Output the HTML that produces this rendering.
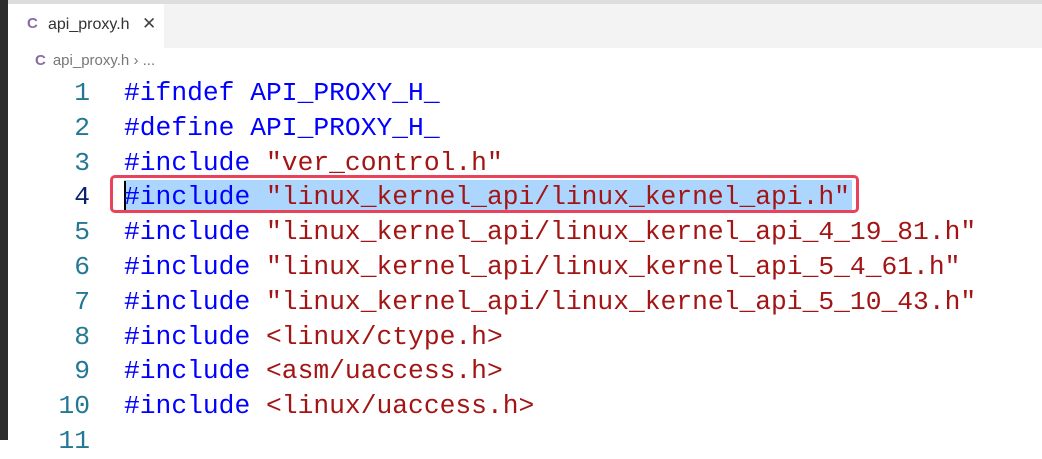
<!DOCTYPE html>
<html><head><meta charset="utf-8"><style>
body{margin:0;width:1042px;height:440px;overflow:hidden;background:#fff;position:relative;font-family:"Liberation Sans",sans-serif}
.top{position:absolute;left:0;top:0;width:1042px;height:4px;background:#dddddd}
.left{position:absolute;left:0;top:0;width:8px;height:440px;background:#2c2c2c}
.tabbar{position:absolute;left:8px;top:4px;right:0;height:44px;background:#f3f3f3}
.tab{position:absolute;left:8px;top:4px;width:156px;height:44px;background:#fff}
.tab .c{position:absolute;left:19px;top:11px;color:#8a6aaa;font-weight:bold;font-size:15px}
.tab .n{position:absolute;left:40px;top:12px;color:#333;font-size:16px}
.tab .x{position:absolute;left:134px;top:10px;color:#444;font-size:17px}
.bc{position:absolute;left:35px;top:52px;font-size:15px;color:#777}
.bc b{color:#8a6aaa;margin-right:7px}
.code{position:absolute;left:0;top:76px;font-family:"Liberation Mono",monospace;font-size:26.3px}
.ln{position:absolute;left:0;width:90px;text-align:right;color:#237893;height:34.8px;line-height:34.8px}
.tx{position:absolute;left:124px;white-space:pre;height:34.8px;line-height:34.8px}
.k{color:#0000ff}.s{color:#a31515}
.sel{position:absolute;left:124px;top:180px;width:728px;height:30px;background:#add6ff}
.box{position:absolute;left:110px;top:175px;width:743px;height:32px;border:3px solid #e8435a;border-radius:5px}
.cur{position:absolute;left:124px;top:181px;width:2px;height:29px;background:#000}
</style></head><body>
<div class="top"></div><div class="left"></div>
<div class="tabbar"></div>
<div class="tab"><span class="c">C</span><span class="n">api_proxy.h</span><span class="x">✕</span></div>
<div class="bc"><b>C</b>api_proxy.h › ...</div>
<div class="sel"></div>
<div class="box"></div>
<div class="cur"></div>
<div class="code">
<div class="ln" style="top:0">1</div><div class="tx" style="top:0"><span class="k">#ifndef API_PROXY_H_</span></div>
<div class="ln" style="top:34.8px">2</div><div class="tx" style="top:34.8px"><span class="k">#define API_PROXY_H_</span></div>
<div class="ln" style="top:69.6px">3</div><div class="tx" style="top:69.6px"><span class="k">#include</span> <span class="s">"ver_control.h"</span></div>
<div class="ln" style="top:104.4px;color:#0b216f">4</div><div class="tx" style="top:104.4px"><span class="k">#include</span> <span class="s">"linux_kernel_api/linux_kernel_api.h"</span></div>
<div class="ln" style="top:139.2px">5</div><div class="tx" style="top:139.2px"><span class="k">#include</span> <span class="s">"linux_kernel_api/linux_kernel_api_4_19_81.h"</span></div>
<div class="ln" style="top:174px">6</div><div class="tx" style="top:174px"><span class="k">#include</span> <span class="s">"linux_kernel_api/linux_kernel_api_5_4_61.h"</span></div>
<div class="ln" style="top:208.8px">7</div><div class="tx" style="top:208.8px"><span class="k">#include</span> <span class="s">"linux_kernel_api/linux_kernel_api_5_10_43.h"</span></div>
<div class="ln" style="top:243.6px">8</div><div class="tx" style="top:243.6px"><span class="k">#include</span> <span class="s">&lt;linux/ctype.h&gt;</span></div>
<div class="ln" style="top:278.4px">9</div><div class="tx" style="top:278.4px"><span class="k">#include</span> <span class="s">&lt;asm/uaccess.h&gt;</span></div>
<div class="ln" style="top:313.2px">10</div><div class="tx" style="top:313.2px"><span class="k">#include</span> <span class="s">&lt;linux/uaccess.h&gt;</span></div>
<div class="ln" style="top:348px">11</div>
</div>
</body></html>
